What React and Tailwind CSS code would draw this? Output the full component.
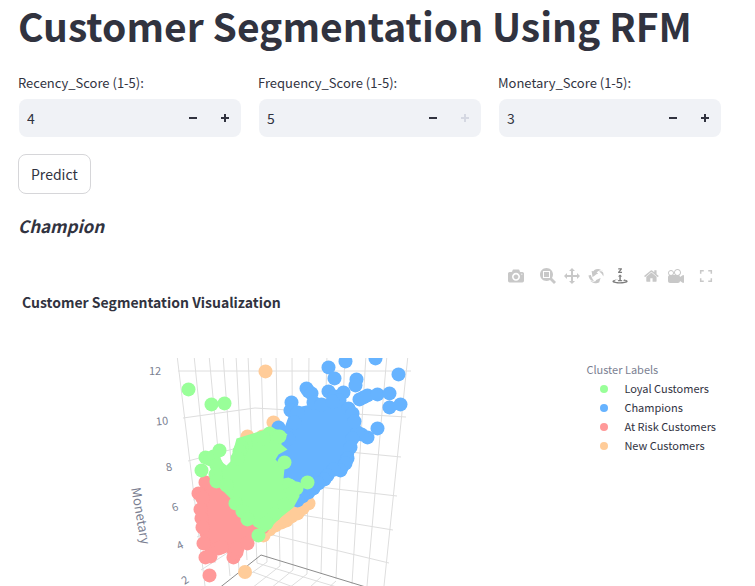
import React, { useState } from "react";

const GREEN = "#99ff99";
const BLUE = "#66b3ff";
const RED = "#ff9999";
const ORANGE = "#ffcc99";

const LEGEND = [
  ["Loyal Customers", GREEN],
  ["Champions", BLUE],
  ["At Risk Customers", RED],
  ["New Customers", ORANGE],
];

const FIELDS = [
  { id: "recency", label: "Recency_Score (1-5):", start: 4 },
  { id: "frequency", label: "Frequency_Score (1-5):", start: 5 },
  { id: "monetary", label: "Monetary_Score (1-5):", start: 3 },
];

const MODEBAR = [
  [
    {
      name: "Download plot as a png",
      d: "m500 450c-83 0-150-67-150-150 0-83 67-150 150-150 83 0 150 67 150 150 0 83-67 150-150 150z m400 150h-120c-16 0-34 13-39 29l-31 93c-6 15-23 28-40 28h-340c-16 0-34-13-39-28l-31-94c-6-15-23-28-40-28h-120c-55 0-100-45-100-100v-450c0-55 45-100 100-100h800c55 0 100 45 100 100v450c0 55-45 100-100 100z m-400-550c-138 0-250 112-250 250 0 138 112 250 250 250 138 0 250-112 250-250 0-138-112-250-250-250z m365 380c-19 0-35 16-35 35 0 19 16 35 35 35 19 0 35-16 35-35 0-19-16-35-35-35z",
    },
  ],
  [
    {
      name: "Zoom",
      d: "m1000-25l-250 251c40 63 63 138 63 218 0 224-182 406-407 406-224 0-406-182-406-406s183-406 407-406c80 0 155 22 218 62l250-250 125 125z m-812 250l0 438 437 0 0-438-437 0z m62 375l313 0 0-312-313 0 0 312z",
    },
    {
      name: "Pan",
      d: "m1000 350l-187 188 0-125-250 0 0 250 125 0-188 187-187-187 125 0 0-250-250 0 0 125-188-188 186-187 0 125 252 0 0-250-125 0 187-188 188 188-125 0 0 250 250 0 0-126 187 188z",
    },
    {
      name: "Orbital rotation",
      d: "m922 660c-5 4-9 7-14 11-359 263-580-31-580-31l-102 28 58-400c0 1 1 1 2 2 118 108 351 249 351 249s-62 27-100 42c88 83 222 183 347 122 16-8 30-17 44-27-2 1-4 2-6 4z m36-329c0 0 64 229-88 296-62 27-124 14-175-11 157-78 225-208 249-266 8-19 11-31 11-31 2 5 6 15 11 32-5-13-8-20-8-20z m-775-239c70-31 117-50 198-32-121 80-199 346-199 346l-96-15-58-12c0 0 55-226 155-287z m603 133l-317-139c0 0 4-4 19-14 7-5 24-15 24-15s-177-147-389 4c235-287 536-112 536-112l31-22 100 299-4-1z m-298-153c6-4 14-9 24-15 0 0-17 10-24 15z",
    },
    {
      name: "Turntable rotation",
      active: true,
      d: "m833 5l-17 108v41l-130-65 130-66c0 0 0 38 0 39 0-1 36-14 39-25 4-15-6-22-16-30-15-12-39-16-56-20-90-22-187-23-279-23-261 0-341 34-353 59 3 60 228 110 228 110-140-8-351-35-351-116 0-120 293-142 474-142 155 0 477 22 477 142 0 50-74 79-163 96z m-374 94c-58-5-99-21-99-40 0-24 65-43 144-43 79 0 143 19 143 43 0 19-42 34-98 40v216h87l-132 135-133-135h88v-216z m167 515h-136v1c16 16 31 34 46 52l84 109v54h-230v-71h124v-1c-16-17-28-32-44-51l-89-114v-51h245v72z",
    },
  ],
  [
    {
      name: "Reset camera to default",
      d: "m786 296v-267q0-15-11-26t-25-10h-214v214h-143v-214h-214q-15 0-25 10t-11 26v267q0 1 0 2t0 2l321 264 321-264q1-1 1-4z m124 39l-34-41q-5-5-12-6h-2q-7 0-12 3l-386 322-386-322q-7-4-13-4-7 2-12 7l-35 41q-4 5-3 13t6 12l401 334q18 15 42 15t43-15l136-114v109q0 8 5 13t13 5h107q8 0 13-5t5-13v-227l122-102q5-5 6-12t-4-13z",
    },
    {
      name: "Reset camera to last save",
      d: "m938 413l-188-125c0 37-17 71-44 94 64 38 107 107 107 187 0 121-98 219-219 219-121 0-219-98-219-219 0-61 25-117 66-156h-115c30 33 49 76 49 125 0 103-84 187-187 187s-188-84-188-187c0-57 26-107 65-141-38-22-65-62-65-109v-250c0-70 56-126 125-126h500c69 0 125 56 125 126l188-126c34 0 62 28 62 63v375c0 35-28 63-62 63z m-750 0c-69 0-125 56-125 125s56 125 125 125 125-56 125-125-56-125-125-125z m406-1c-87 0-157 70-157 157 0 86 70 156 157 156s156-70 156-156-70-157-156-157z",
    },
  ],
  [
    {
      name: "Fullscreen",
      d: "M120 730v-240h95v145h145v95z M640 730h240v-240h-95v145h-145z M120 -30v240h95v-145h145v-95z M640 -30h240v240h-95v-145h-145z",
    },
  ],
];

const GRID = [
  // upright lines of the two back walls
  "M177 355L205 586", "M194 355L215 563", "M209 355L230 576", "M223 355L239 570",
  "M236 355L247 560", "M248 355L257 563", "M261 355L267 562", "M276 355L280 566",
  "M292 355L293 570", "M309 355L307 574", "M327 355L321 574", "M345 355L336 579",
  "M366 355L352 584", "M387 355L367 586", "M408 355L384 586",
  // levels of the Monetary axis
  "M178 371H411", "M183 418L255 408L406 417", "M188 461L256 443L401 457",
  "M193 500L258 480L397 496", "M197 537L259 508L393 530", "M201 570L260 532L389 563",
  // floor
  "M257 563L340 588", "M253 572L296 588", "M267 562L246 577", "M280 566L252 588",
  "M293 570L271 588", "M307 574L289 588", "M321 577L309 588", "M336 581L328 588",
];

const TICKS = [
  ["12", 155, 371, 0], ["10", 162, 421, -6], ["8", 169, 467, -12],
  ["6", 175, 507, -18], ["4", 180, 545, -24], ["2", 185, 580, -32],
];

const CLUSTERS = [
  {
    color: ORANGE,
    area: "M250 438L273 428L305 500L265 536Z",
    points: [[265, 371], [247, 436], [262, 436], [273, 422], [263, 535], [269, 529], [275, 525], [281, 522], [286, 520], [291, 516], [297, 513], [302, 508], [308, 503]],
  },
  {
    color: RED,
    area: "M201 480L225 484L270 525L262 533L247 545L238 552L228 554L221 547L206 556L198 530Z",
    points: [[205, 482], [198, 493], [202, 498], [200, 509], [201, 518], [202, 527], [203, 543], [205, 557], [210, 556], [218, 548], [221, 547], [233, 557], [236, 552], [237, 548], [247, 543], [209, 575], [262, 527]],
  },
  {
    color: BLUE,
    area: "M283 430L291 408L306 405L330 398L352 408L360 422L360 436L355 446L352 462L345 474L334 476L318 489L297 504L280 500L270 470L270 450L281 440Z",
    points: [[278, 427], [291, 402], [290, 410], [297, 412], [294, 422], [288, 438], [306, 388], [308, 391], [311, 393], [313, 402], [321, 404], [328, 391], [334, 396], [343, 392], [339, 400], [332, 401], [328, 367], [334, 378], [345, 361], [375, 358], [356, 379], [355, 385], [398, 374], [359, 399], [363, 397], [367, 395], [377, 394], [389, 393], [389, 407], [400, 404], [377, 428], [367, 437], [361, 434], [357, 432], [348, 408], [352, 413], [354, 421], [352, 438], [350, 447], [347, 458], [345, 463], [340, 470], [333, 469], [327, 475], [324, 479], [318, 483], [313, 488], [308, 492], [302, 496], [297, 500]],
  },
  {
    color: GREEN,
    area: "M236 438L262 430L272 428L281 430L287 434L281 440L281 444L287 449L278 454L275 459L284 468L283 478L288 477L297 482L299 496L293 507L279 518L265 532L254 526L242 513L232 500L212 480L211 462L219 455L222 462L226 465L230 461Z",
    points: [[188, 389], [211, 404], [224, 403], [205, 457], [210, 459], [213, 456], [219, 450], [201, 470], [216, 465], [215, 474], [216, 481], [226, 485], [235, 503], [242, 511], [247, 519], [258, 535], [245, 444], [241, 447], [239, 451], [237, 458], [269, 433], [263, 438], [279, 436], [284, 462], [307, 482], [289, 485], [296, 488], [292, 493], [284, 505], [274, 514], [266, 523]],
  },
];

function NumberField({ id, label, start }) {
  const [value, setValue] = useState(start);
  const step = "flex w-8 items-center justify-center text-[#31333f] disabled:text-[#d5d8e2]";
  return (
    <div className="flex flex-col gap-1">
      <label htmlFor={id} className="text-[13px] leading-6 text-[#31333f]">{label}</label>
      <div className="mx-px flex h-[38px] overflow-hidden rounded-lg bg-[#f0f2f6]">
        <input
          id={id}
          inputMode="numeric"
          value={value}
          onChange={(e) => setValue(Number(e.target.value) || 1)}
          className="min-w-0 flex-1 bg-transparent pl-2 text-sm text-[#31333f] outline-none"
        />
        <button type="button" aria-label={`Decrease ${label}`} disabled={value <= 1} onClick={() => setValue(value - 1)} className={step}>
          <svg width="8" height="8" viewBox="0 0 8 8" fill="currentColor"><path d="M0 3h8v2H0z" /></svg>
        </button>
        <button type="button" aria-label={`Increase ${label}`} disabled={value >= 5} onClick={() => setValue(value + 1)} className={step}>
          <svg width="8" height="8" viewBox="0 0 8 8" fill="currentColor"><path d="M3 0h2v3h3v2H5v3H3V5H0V3h3z" /></svg>
        </button>
      </div>
    </div>
  );
}

function Modebar() {
  return (
    <div className="flex justify-end gap-2 pr-1">
      {MODEBAR.map((group) => (
        <div key={group[0].name} className="flex last:-ml-0.5">
          {group.map((icon) => (
            <button
              key={icon.name}
              type="button"
              aria-label={icon.name}
              className={icon.active ? "flex h-6 w-6 items-center justify-center text-[#7c7c7c]" : "flex h-6 w-6 items-center justify-center text-[#c8c8c8]"}
            >
              <svg width="16" height="16" viewBox="0 0 1000 1000" fill="currentColor">
                <path transform="matrix(1 0 0 -1 0 850)" d={icon.d} />
              </svg>
            </button>
          ))}
        </div>
      ))}
    </div>
  );
}

function ScatterPlot() {
  return (
    <svg width="320" height="228" viewBox="110 358 320 228" role="img" aria-label="Customer clusters in three dimensions" className="shrink-0 overflow-hidden">
      <g fill="none" stroke="#dedede" strokeWidth="1">
        {GRID.map((d) => <path key={d} d={d} />)}
      </g>
      <path d="M218 589L261 555L369 588" fill="none" stroke="#8c8c8c" strokeWidth="1" />
      <circle cx="245" cy="572" r="7" fill={ORANGE} />
      {CLUSTERS.map((c) => (
        <g key={c.color} fill={c.color} transform="translate(0.5 0.4)">
          <path d={c.area} />
          {c.points.map(([x, y]) => <circle key={`${x}-${y}`} cx={x} cy={y} r="7" />)}
        </g>
      ))}
      <g fill="#7b7f92" textAnchor="middle" fontSize="11">
        {TICKS.map(([t, x, y, a]) => (
          <text key={t} x={x} y={y + 4} transform={`rotate(${a} ${x} ${y})`}>{t}</text>
        ))}
        <text x="140" y="520" fontSize="13" transform="rotate(80 140 516)">Monetary</text>
      </g>
    </svg>
  );
}

export default function App() {
  return (
    <main className="bg-white pl-[18px] pr-[33px] font-['Noto_Sans_CJK_SC','Noto_Sans',sans-serif] text-[#31333f]">
      <h1 className="whitespace-nowrap text-[39px] font-bold leading-[50px]">Customer Segmentation Using RFM</h1>
      <form onSubmit={(e) => e.preventDefault()} className="mt-[21px]">
        <div className="grid grid-cols-3 gap-4">
          {FIELDS.map((f) => <NumberField key={f.id} {...f} />)}
        </div>
        <button type="submit" className="mt-[17px] h-10 rounded-lg border border-[#d6d6d9] px-3 text-sm leading-5">Predict</button>
      </form>
      <h5 className="mt-5 text-[17px] font-bold italic leading-6">Champion</h5>
      <section className="mt-[26px]">
        <Modebar />
        <h2 className="mt-0.5 pl-1 text-sm font-bold leading-6">Customer Segmentation Visualization</h2>
        <div className="mt-11 flex justify-between pl-[92px]">
          <ScatterPlot />
          <div className="shrink-0 pr-1.5 pt-px">
            <h3 className="text-[11px] leading-5 text-[#7b7f92]">Cluster Labels</h3>
            <ul>
              {LEGEND.map(([name, color]) => (
                <li key={name} className="flex items-center gap-4 pl-3.5 text-[11px] leading-[19px]">
                  <svg width="8" height="8" viewBox="0 0 8 8"><circle cx="4" cy="4" r="4" fill={color} /></svg>
                  {name}
                </li>
              ))}
            </ul>
          </div>
        </div>
      </section>
    </main>
  );
}
